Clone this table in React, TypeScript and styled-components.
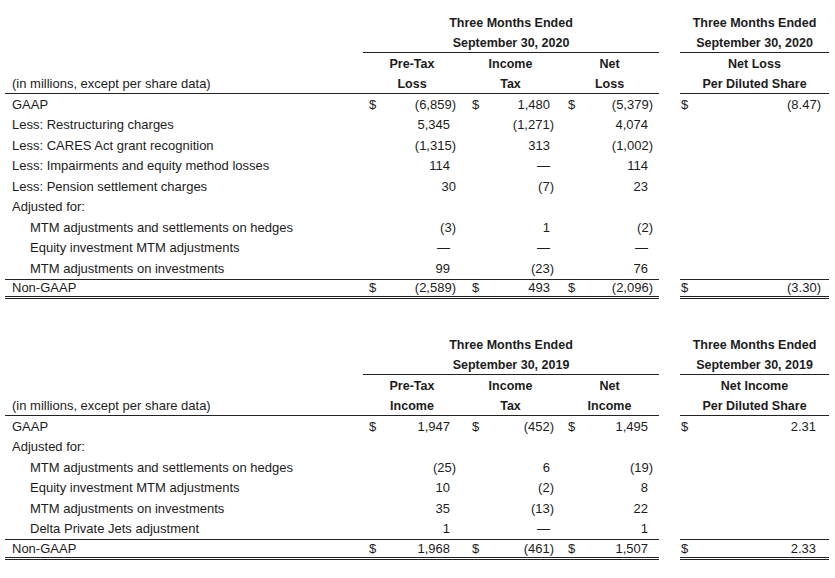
import React from 'react';
import styled, { createGlobalStyle, css } from 'styled-components';

const Global = createGlobalStyle`
  html, body { margin: 0; padding: 0; background: #ffffff; }
  body {
    font-family: "Liberation Sans", Arial, Helvetica, sans-serif;
    font-size: 13px;
    color: #1c1c1c;
  }
`;

const Page = styled.div`
  width: 835px;
  box-sizing: border-box;
  padding: 12px 6px 0 5px;
  display: flex;
  flex-direction: column;
  gap: 35px;
`;

const Table = styled.div`
  display: flex;
  flex-direction: column;
  width: 824px;
`;

const Row = styled.div`
  display: grid;
  grid-template-columns: 358px 98px 99px 99px 21px 149px;
  height: 20.5px;
`;

type Line = 'none' | 'under' | 'total';

const lineStyle = (l: Line) => {
  if (l === 'under') return css`border-bottom: 1px solid #222;`;
  if (l === 'total')
    return css`
      border-top: 1px solid #222;
      border-bottom: 3px double #222;
    `;
  return css``;
};

const Cell = styled.div<{ $line: Line }>`
  box-sizing: border-box;
  display: flex;
  align-items: center;
  white-space: nowrap;
  line-height: 14px;
  padding-top: 1px;
  ${(p) => lineStyle(p.$line)}
`;

const Label = styled(Cell)<{ $indent?: boolean }>`
  padding-left: ${(p) => (p.$indent ? 25 : 7)}px;
`;

const Head = styled(Cell)<{ $span?: string }>`
  justify-content: center;
  font-weight: bold;
  font-size: 12.5px;
  grid-column: ${(p) => p.$span || 'auto'};
`;

const Gap = styled.div``;

const Amount = styled(Cell)<{ $dollarAt: number; $padR: number }>`
  justify-content: space-between;
  padding-left: ${(p) => p.$dollarAt}px;
  padding-right: ${(p) => p.$padR}px;
`;

const Dollar = styled.span``;
const Value = styled.span``;

type ColSpec = { dollarAt: number; plain: number; paren: number };
const COLS: ColSpec[] = [
  { dollarAt: 6, plain: 11, paren: 5 },
  { dollarAt: 11, plain: 10, paren: 6 },
  { dollarAt: 8, plain: 11, paren: 6 },
  { dollarAt: 1, plain: 13, paren: 8 },
];

type DataRow = {
  label: string;
  indent?: boolean;
  values?: (string | null)[];
  dollar?: boolean;
  total?: boolean;
  parenAlign?: number[];
};

type TableSpec = {
  period: string;
  sub: [string, string][];
  right: [string, string];
  rows: DataRow[];
};

const tables: TableSpec[] = [
  {
    period: 'September 30, 2020',
    sub: [
      ['Pre-Tax', 'Loss'],
      ['Income', 'Tax'],
      ['Net', 'Loss'],
    ],
    right: ['Net Loss', 'Per Diluted Share'],
    rows: [
      { label: 'GAAP', values: ['(6,859)', '1,480', '(5,379)', '(8.47)'], dollar: true },
      { label: 'Less: Restructuring charges', values: ['5,345', '(1,271)', '4,074', null] },
      { label: 'Less: CARES Act grant recognition', values: ['(1,315)', '313', '(1,002)', null] },
      { label: 'Less: Impairments and equity method losses', values: ['114', '—', '114', null] },
      { label: 'Less: Pension settlement charges', values: ['30', '(7)', '23', null], parenAlign: [0] },
      { label: 'Adjusted for:' },
      { label: 'MTM adjustments and settlements on hedges', indent: true, values: ['(3)', '1', '(2)', null] },
      { label: 'Equity investment MTM adjustments', indent: true, values: ['—', '—', '—', null] },
      { label: 'MTM adjustments on investments', indent: true, values: ['99', '(23)', '76', null] },
      { label: 'Non-GAAP', values: ['(2,589)', '493', '(2,096)', '(3.30)'], dollar: true, total: true },
    ],
  },
  {
    period: 'September 30, 2019',
    sub: [
      ['Pre-Tax', 'Income'],
      ['Income', 'Tax'],
      ['Net', 'Income'],
    ],
    right: ['Net Income', 'Per Diluted Share'],
    rows: [
      { label: 'GAAP', values: ['1,947', '(452)', '1,495', '2.31'], dollar: true },
      { label: 'Adjusted for:' },
      { label: 'MTM adjustments and settlements on hedges', indent: true, values: ['(25)', '6', '(19)', null] },
      { label: 'Equity investment MTM adjustments', indent: true, values: ['10', '(2)', '8', null] },
      { label: 'MTM adjustments on investments', indent: true, values: ['35', '(13)', '22', null] },
      { label: 'Delta Private Jets adjustment', indent: true, values: ['1', '—', '1', null] },
      { label: 'Non-GAAP', values: ['1,968', '(461)', '1,507', '2.33'], dollar: true, total: true },
    ],
  },
];

const AmountCell: React.FC<{ col: number; value: string | null; dollar?: boolean; line: Line; forceParen?: boolean }> = ({
  col,
  value,
  dollar,
  line,
  forceParen,
}) => {
  const spec = COLS[col];
  const paren = forceParen || (value !== null && value.endsWith(')'));
  return (
    <Amount $line={line} $dollarAt={spec.dollarAt} $padR={paren ? spec.paren : spec.plain}>
      <Dollar>{dollar && value !== null ? '$' : ''}</Dollar>
      <Value>{value ?? ''}</Value>
    </Amount>
  );
};

const FinTable: React.FC<{ spec: TableSpec }> = ({ spec }) => (
  <Table>
    <Row>
      <Label $line="none" />
      <Head $line="none" $span="2 / 5">Three Months Ended</Head>
      <Gap />
      <Head $line="none">Three Months Ended</Head>
    </Row>
    <Row>
      <Label $line="none" />
      <Head $line="under" $span="2 / 5">{spec.period}</Head>
      <Gap />
      <Head $line="under">{spec.period}</Head>
    </Row>
    <Row>
      <Label $line="none" />
      {spec.sub.map((s, i) => (
        <Head key={i} $line="none">{s[0]}</Head>
      ))}
      <Gap />
      <Head $line="none">{spec.right[0]}</Head>
    </Row>
    <Row>
      <Label $line="under">(in millions, except per share data)</Label>
      {spec.sub.map((s, i) => (
        <Head key={i} $line="under">{s[1]}</Head>
      ))}
      <Gap />
      <Head $line="under">{spec.right[1]}</Head>
    </Row>
    {spec.rows.map((r, ri) => {
      const line: Line = r.total ? 'total' : 'none';
      const vals = r.values ?? [null, null, null, null];
      return (
        <Row key={ri}>
          <Label $line={line} $indent={r.indent}>{r.label}</Label>
          {vals.slice(0, 3).map((v, ci) => (
            <AmountCell
              key={ci}
              col={ci}
              value={v}
              dollar={r.dollar}
              line={line}
              forceParen={r.parenAlign?.includes(ci)}
            />
          ))}
          <Gap />
          <AmountCell col={3} value={vals[3]} dollar={r.dollar} line={line} />
        </Row>
      );
    })}
  </Table>
);

export default function App() {
  return (
    <>
      <Global />
      <Page>
        {tables.map((t, i) => (
          <FinTable key={i} spec={t} />
        ))}
      </Page>
    </>
  );
}
